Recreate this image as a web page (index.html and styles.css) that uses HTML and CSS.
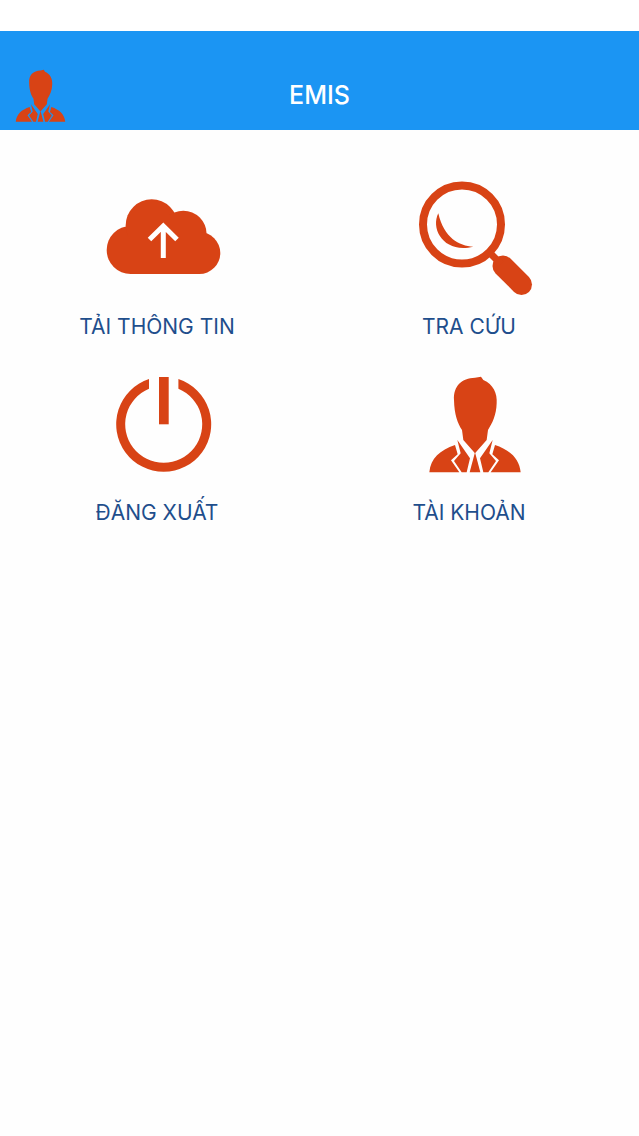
FILE: index.html
```html
<!DOCTYPE html>
<html lang="vi">
<head>
  <meta charset="UTF-8">
  <meta name="viewport" content="width=device-width, initial-scale=1.0">
  <title>EMIS</title>
  <link rel="stylesheet" href="styles.css">
</head>
<body>

  <svg class="defs" width="0" height="0">
    <symbol id="person" viewBox="45 -3 360 360">
      <path d="M162 105C160 62 185 40 225 38L243 35L250 45C280 58 292 85 290 115C289 150 277 175 264 195L260 225L225 265L190 225L186 195C173 175 163 150 162 105Z"/>
      <path d="M165 240C120 255 92 280 88 322H178L153 286L173 268Z"/>
      <path d="M285 240C330 255 358 280 362 322H272L297 286L277 268Z"/>
      <path d="M172 225L210 280L200 322H185L162 288L182 265Z"/>
      <path d="M278 225L240 280L250 322H265L288 288L268 265Z"/>
      <path d="M225 262L241 322H209Z"/>
    </symbol>
  </svg>

  <div class="status-bar"></div>

  <header class="top-bar">
    <svg class="top-avatar"><use href="#person"/></svg>
    <h1>EMIS</h1>
  </header>

  <main class="menu">
    <a class="tile">
      <svg class="tile-icon" viewBox="0 0 120 120">
        <circle cx="27.7" cy="72" r="24"/>
        <circle cx="48.7" cy="47.3" r="26"/>
        <circle cx="80.3" cy="56" r="23.3"/>
        <circle cx="96.3" cy="75" r="21"/>
        <rect x="27" y="50" width="69" height="46"/>
        <path class="arrow" d="M60.3 80V49M46.5 61.5L60.3 48L74 61.5"/>
      </svg>
      <span>TẢI THÔNG TIN</span>
    </a>
    <a class="tile">
      <svg class="tile-icon" viewBox="0 0 120 120">
        <circle class="ring" cx="47" cy="46.5" r="39" stroke-width="8"/>
        <path d="M23.3 35.3C15 52 30 76 58.3 68.7C44 68 29 60 23.3 35.3Z"/>
        <path class="handle" d="M88 88L106.5 106.5"/>
        <path class="neck" d="M74 74L86 86"/>
      </svg>
      <span>TRA CỨU</span>
    </a>
    <a class="tile">
      <svg class="tile-icon" viewBox="0 0 120 120">
        <path d="M46 15.1A47.5 47.5 0 1 0 75.4 15.1V24.7A38.5 38.5 0 1 1 46 24.7Z"/>
        <rect x="56" y="13" width="9.7" height="47.3"/>
      </svg>
      <span>ĐĂNG XUẤT</span>
    </a>
    <a class="tile">
      <svg class="tile-icon"><use href="#person"/></svg>
      <span>TÀI KHOẢN</span>
    </a>
  </main>

</body>
</html>
```

FILE: styles.css
```css
body {
  font-family: 'Inter', 'Liberation Sans', sans-serif;
  background-color: #fefefe;
  margin: 0;
}

.defs {
  display: block;
  height: 0;
}

.status-bar {
  height: 31px;
  background-color: #fff;
}

.top-bar {
  display: grid;
  grid-template-columns: 1fr auto 1fr;
  height: 99px;
  box-sizing: border-box;
  padding: 31px 8px 2px;
  background-color: #1b95f3;
}

.top-avatar {
  width: 65px;
  height: 65px;
  align-self: end;
  fill: #d84315;
  filter: blur(0.6px);
}

.top-bar h1 {
  grid-column: 2;
  align-self: center;
  margin: 0;
  color: #fff;
  font-size: 25px;
  font-weight: 500;
}

.menu {
  display: grid;
  grid-template-columns: 312px 312px;
  row-gap: 25px;
  padding: 48px 0 0 1px;
}

.tile {
  display: flex;
  flex-direction: column;
  align-items: center;
  color: #1f4e8c;
  font-size: 21px;
  line-height: 24px;
}

.tile-icon {
  width: 120px;
  height: 120px;
  margin: 0 0 17px 12px;
  fill: #d84315;
}

.arrow {
  fill: none;
  stroke: #fff;
  stroke-width: 5;
}

.ring {
  fill: none;
  stroke: #d84315;
}

.handle {
  fill: none;
  stroke: #d84315;
  stroke-width: 21;
  stroke-linecap: round;
}

.neck {
  fill: none;
  stroke: #d84315;
  stroke-width: 7;
}
```
